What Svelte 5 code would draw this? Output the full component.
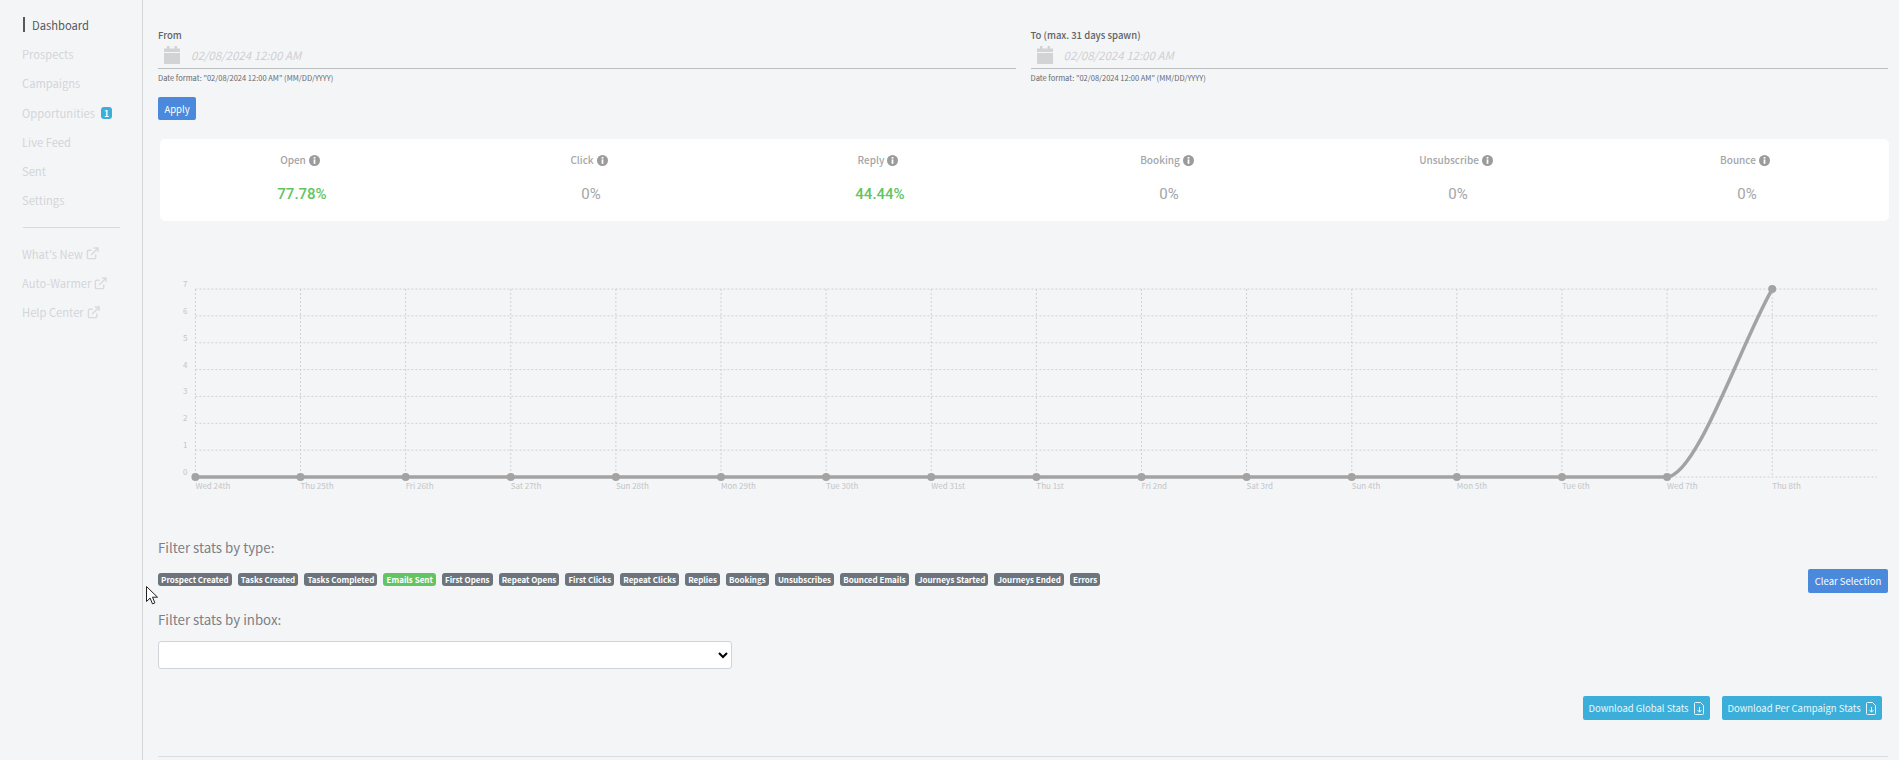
<script lang="ts">
	const nav = [
		{ label: "Dashboard", active: true },
		{ label: "Prospects" },
		{ label: "Campaigns" },
		{ label: "Opportunities", badge: "1" },
		{ label: "Live Feed" },
		{ label: "Sent" },
		{ label: "Settings" }
	];
	const links = ["What's New", "Auto-Warmer", "Help Center"];
	const stats = [
		{ label: "Open", value: "77.78%", good: true },
		{ label: "Click", value: "0%" },
		{ label: "Reply", value: "44.44%", good: true },
		{ label: "Booking", value: "0%" },
		{ label: "Unsubscribe", value: "0%" },
		{ label: "Bounce", value: "0%" }
	];
	const types = [
		"Prospect Created", "Tasks Created", "Tasks Completed", "Emails Sent", "First Opens",
		"Repeat Opens", "First Clicks", "Repeat Clicks", "Replies", "Bookings", "Unsubscribes",
		"Bounced Emails", "Journeys Started", "Journeys Ended", "Errors"
	];
	const days = [
		"Wed 24th", "Thu 25th", "Fri 26th", "Sat 27th", "Sun 28th", "Mon 29th", "Tue 30th", "Wed 31st",
		"Thu 1st", "Fri 2nd", "Sat 3rd", "Sun 4th", "Mon 5th", "Tue 6th", "Wed 7th", "Thu 8th"
	];
	const dates = [
		{ label: "From" },
		{ label: "To (max. 31 days spawn)" }
	];

	// chart coordinates are relative to the svg, which starts at x=143, y=220
	const x0 = 52.4;
	const stepX = 105.12;
	const y0 = 256;
	const stepY = 26.85;
	const xs = days.map((_, i) => x0 + i * stepX);
	const ys = [0, 1, 2, 3, 4, 5, 6, 7].map((v) => ({ v, y: y0 - v * stepY }));
	const right = 1734;
	const last = xs[15];
	const prev = xs[14];
	const curve = `M${x0} ${y0} L${prev} ${y0} C${prev + 30} ${y0 - 2} ${last - 32} ${y0 - 132} ${last} ${y0 - 7 * stepY}`;
</script>

<div class="page">
	<aside class="sidebar">
		<nav class="nav">
			{#each nav as item}
				<div class="nav-item" class:active={item.active}>
					<span>{item.label}</span>
					{#if item.badge}<span class="nav-badge">{item.badge}</span>{/if}
				</div>
			{/each}
		</nav>
		<div class="nav-sep"></div>
		<nav class="nav">
			{#each links as link}
				<div class="nav-item">
					<span>{link}</span>
					<svg class="ext" viewBox="0 0 14 14" width="13" height="13" fill="none" stroke="#d8dadd" stroke-width="1.5">
						<path d="M10.5 8v3.2a1.3 1.3 0 0 1-1.3 1.3H2.8a1.3 1.3 0 0 1-1.3-1.3V4.8a1.3 1.3 0 0 1 1.3-1.3H6" />
						<path d="M5.5 8.5 12.5 1.5M8.5 1h4.5v4.5" />
					</svg>
				</div>
			{/each}
		</nav>
	</aside>

	<main class="main">
		<section class="dates">
			{#each dates as d}
				<div class="date-field">
					<div class="date-label">{d.label}</div>
					<div class="date-input">
						<svg viewBox="0 0 16 18" width="16" height="18" fill="#d2d3d5">
							<rect x="3" y="0" width="2.4" height="4" />
							<rect x="10.6" y="0" width="2.4" height="4" />
							<path d="M0 2.5h16v3.5H0zM0 7h16v11H0z" />
						</svg>
						<input type="text" placeholder="02/08/2024 12:00 AM" />
					</div>
					<div class="date-hint">Date format: "02/08/2024 12:00 AM" (MM/DD/YYYY)</div>
				</div>
			{/each}
		</section>
		<button class="btn apply">Apply</button>

		<section class="stats">
			{#each stats as s}
				<div class="stat">
					<div class="stat-label">
						{s.label}
						<svg viewBox="0 0 10 10" width="11" height="11">
							<circle cx="5" cy="5" r="5" fill="#9b9b9b" />
							<rect x="4.2" y="1.8" width="1.6" height="1.5" fill="#fff" />
							<rect x="4.2" y="4" width="1.6" height="4" fill="#fff" />
						</svg>
					</div>
					<div class="stat-value" class:good={s.good}>{s.value}</div>
				</div>
			{/each}
		</section>

		<svg class="chart" width="1756" height="280" viewBox="0 0 1756 280">
			{#each ys as t}
				<line x1={x0} x2={right} y1={t.y} y2={t.y} class="grid" />
				<text x={x0 - 8} y={t.y - 2} class="tick" text-anchor="end">{t.v}</text>
			{/each}
			{#each days as day, i}
				<line x1={xs[i]} x2={xs[i]} y1={y0 - 7 * stepY} y2={y0} class="grid" />
				<text x={xs[i]} y={y0 + 12} class="tick">{day}</text>
			{/each}
			<path d={curve} fill="none" stroke="#a3a3a3" stroke-width="3.5" />
			{#each days as _, i}
				<circle cx={xs[i]} cy={i === 15 ? y0 - 7 * stepY : y0} r="4" fill="#a3a3a3" />
			{/each}
		</svg>

		<h3 class="filter-title first">Filter stats by type:</h3>
		<div class="type-row">
			<div class="badges">
				{#each types as t}
					<span class="badge" class:on={t === "Emails Sent"}>{t}</span>
				{/each}
			</div>
			<button class="btn clear">Clear Selection</button>
		</div>

		<h3 class="filter-title second">Filter stats by inbox:</h3>
		<select class="inbox"><option></option></select>

		<div class="downloads">
			{#each ["Download Global Stats", "Download Per Campaign Stats"] as label}
				<button class="btn download">
					{label}
					<svg viewBox="0 0 11 13" width="11" height="13" fill="none" stroke="#e6f5fb" stroke-width="1">
						<path d="M1.5.5h5l3 3v8a1 1 0 0 1-1 1h-7a1 1 0 0 1-1-1v-10a1 1 0 0 1 1-1z" />
						<path d="M5.5 5v5M3.5 8l2 2.2L7.5 8" />
					</svg>
				</button>
			{/each}
		</div>
		<hr class="rule" />
	</main>

	<svg class="cursor" viewBox="0 0 12 19" width="12" height="19">
		<path d="M.5.5v15l3.6-3.4 2.4 5.8 2.4-1-2.4-5.7h5z" fill="#fff" stroke="#222" stroke-width="1" />
	</svg>
</div>

<style>
	:global(body) { background: #f4f5f7; }
	.page {
		display: flex;
		height: 760px;
		overflow: hidden;
		position: relative;
		background: #f4f5f7;
		font-family: "Noto Sans CJK SC", "Noto Sans", sans-serif;
		color: #6b6f75;
	}
	.sidebar { width: 120px; flex-shrink: 0; border-right: 1px solid #d4d5d8; padding: 10px 0 0 22px; box-sizing: content-box; }
	.nav { display: flex; flex-direction: column; }
	.nav-item { height: 29.3px; display: flex; align-items: center; gap: 3px; font-size: 11.2px; color: #d3d6d9; white-space: nowrap; }
	.nav-item.active { color: #55585c; position: relative; padding-left: 10px; }
	.nav-item.active::before { content: ""; position: absolute; left: 1px; top: 7px; width: 2px; height: 15px; background: #55585c; }
	.nav-badge { background: #3bafda; color: #fff; font-size: 8.5px; font-weight: 700; border-radius: 3px; width: 11px; height: 12px; line-height: 12px; text-align: center; margin-left: 3px; }
	.nav-sep { height: 1px; background: #d9dadc; margin: 12px 22px 11px 1px; width: 97px; }

	.main { flex: 1; min-width: 0; padding: 28px 11px 0 15px; }
	.dates { display: grid; grid-template-columns: 1fr 1fr; gap: 15px; }
	.date-label { font-size: 9.5px; font-weight: 500; line-height: 14px; color: #5f6368; }
	.date-input { display: flex; align-items: center; gap: 11px; height: 26px; padding-left: 6px; border-bottom: 1px solid #bdbec1; }
	.date-input input { border: 0; background: none; outline: 0; padding: 0; flex: 1; font: italic 11.5px "Noto Sans CJK SC", sans-serif; }
	.date-input input::placeholder { color: #cfd0d2; }
	.date-hint { font-size: 7.5px; line-height: 12px; margin-top: 3px; color: #66696e; white-space: nowrap; }

	.btn { border: 0; border-radius: 2px; color: #fff; font-family: inherit; font-size: 9.5px; height: 24px; padding: 0; white-space: nowrap; }
	.apply { display: block; width: 38px; margin-top: 13px; height: 23px; background: #4a89dc; }
	.clear { width: 80px; background: #4a89dc; flex-shrink: 0; }

	.stats { display: grid; grid-template-columns: repeat(6, 289px); height: 82px; margin: 19px -1px 0 2px; background: #fff; border-radius: 5px; overflow: hidden; }
	.stat { text-align: center; padding-top: 13px; }
	.stat-label { font-size: 10px; line-height: 16px; color: #a3a5a8; font-weight: 500; display: flex; justify-content: center; align-items: center; gap: 3px; padding-right: 9px; }
	.stat-value { margin-top: 15px; padding-right: 5px; font: 400 15px/22px Roboto, sans-serif; color: #a3a5a8; }
	.stat-value.good { color: #62c462; font-weight: 500; }

	.chart { display: block; margin-left: -15px; height: 280px; }
	.grid { stroke: #cfd0d2; stroke-width: 1; stroke-dasharray: 2 2; }
	.tick { font-size: 8px; fill: #c3c5c8; }

	.filter-title { margin: 0; font-size: 13.3px; font-weight: 400; line-height: 20px; color: #7c8086; }
	.filter-title.first { margin-top: 37px; }
	.filter-title.second { margin-top: 17px; }
	.type-row { display: flex; justify-content: space-between; align-items: flex-start; margin-top: 11px; height: 24px; }
	.badges { display: flex; gap: 6px; margin-top: 4px; }
	.badge { background: #6c757d; color: #fff; font-size: 8px; font-weight: 700; line-height: 13px; height: 13px; padding: 0 3.1px; border-radius: 3px; white-space: nowrap; }
	.badge.on { background: #62c462; }
	.inbox { display: block; margin-top: 11px; width: 574px; height: 28px; background: #fff; border: 1px solid #ced4da; border-radius: 3px; }

	.downloads { display: flex; justify-content: flex-end; gap: 12px; margin-top: 27px; padding-right: 6px; }
	.download { background: #3bafda; display: flex; align-items: center; justify-content: center; gap: 5px; color: #e8f6fb; }
	.download:first-child { width: 127px; }
	.download:last-child { width: 160px; }
	.rule { border: 0; height: 1px; background: #dcdde0; margin: 36px 0 0; }
	.cursor { position: absolute; left: 146px; top: 586px; }
</style>
